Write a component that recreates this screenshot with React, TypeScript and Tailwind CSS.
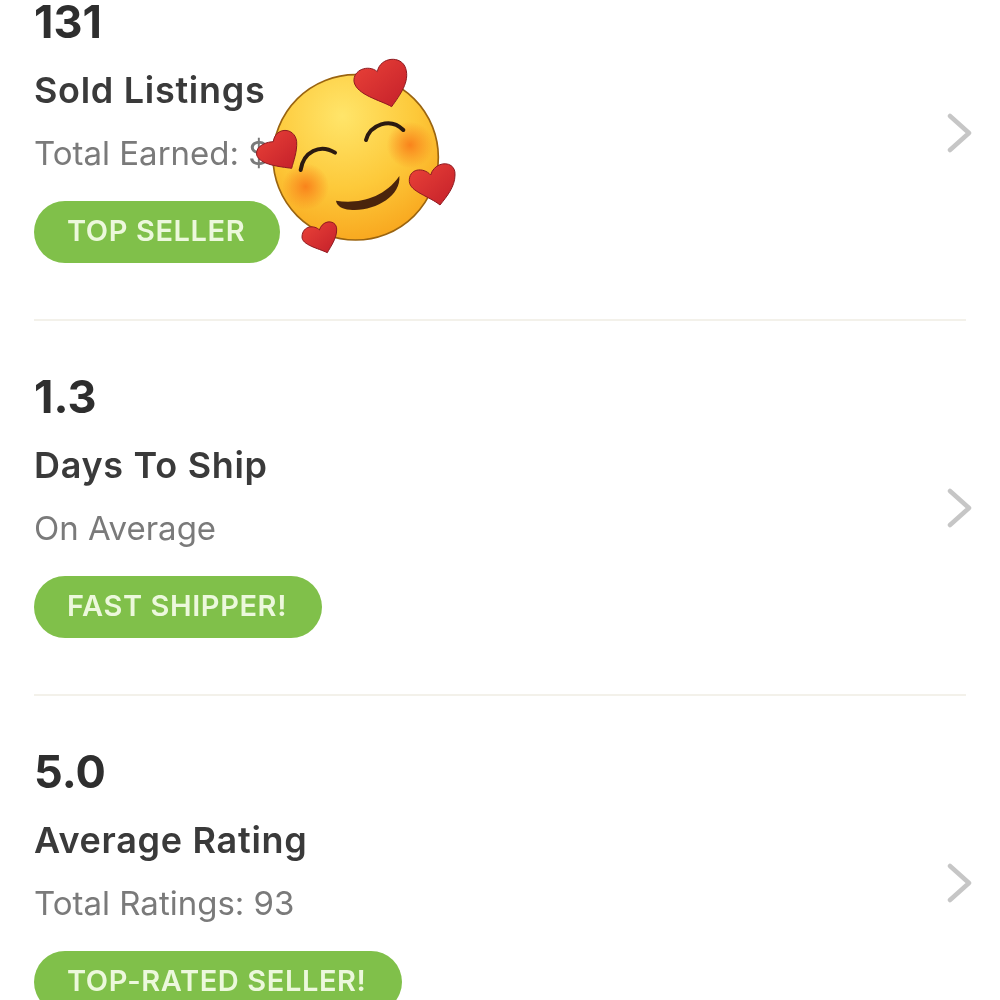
import React from 'react';

type Stat = {
  value: string;
  title: string;
  detail: string;
  badge: string;
};

const stats: Stat[] = [
  { value: '131', title: 'Sold Listings', detail: 'Total Earned: $1,204', badge: 'TOP SELLER' },
  { value: '1.3', title: 'Days To Ship', detail: 'On Average', badge: 'FAST SHIPPER!' },
  { value: '5.0', title: 'Average Rating', detail: 'Total Ratings: 93', badge: 'TOP-RATED SELLER!' },
];

function Chevron() {
  return (
    <svg className="w-[28px] h-[40px] -mr-[7px] shrink-0" viewBox="0 0 28 40" fill="none" stroke="#c6c6c6" strokeWidth={4.5} strokeLinecap="round" strokeLinejoin="round">
      <path d="M5 3 L24 20 L5 37" />
    </svg>
  );
}

function StatRow({ stat }: { stat: Stat }) {
  return (
    <div className="h-[375px] flex items-center justify-between border-b-2 border-[#f3f1ea]">
      <div className="flex flex-col items-start">
        <div className="h-[40px] text-[45px] leading-[40px] font-bold text-[#2e2e2e]">{stat.value}</div>
        <div className="mt-[30px] h-[36px] text-[36px] leading-[36px] font-semibold tracking-[0.7px] text-[#3a3a3a]">{stat.title}</div>
        <div className="mt-[27px] h-[36px] text-[33px] leading-[36px] text-[#7a7a7a]">{stat.detail}</div>
        <div className="mt-[30px] h-[62px] pl-[33px] pr-[35px] pb-[3px] rounded-full bg-[#80c04a] flex items-center text-[29px] font-semibold tracking-[0.6px] text-[#ecf8dc]">
          {stat.badge}
        </div>
      </div>
      <Chevron />
    </div>
  );
}

// sticker sitting on top of the first row
function LoveEmoji() {
  return (
    <svg className="absolute left-[240px] top-[40px] w-[230px] h-[230px]" viewBox="0 0 690 690">
      <defs>
        <radialGradient id="face" cx="42%" cy="25%" r="80%">
          <stop offset="0%" stopColor="#ffe56a" />
          <stop offset="55%" stopColor="#fdc93a" />
          <stop offset="100%" stopColor="#f8a41c" />
        </radialGradient>
        <radialGradient id="cheek">
          <stop offset="0%" stopColor="#f9801a" stopOpacity="0.95" />
          <stop offset="100%" stopColor="#f9801a" stopOpacity="0" />
        </radialGradient>
        <linearGradient id="heart" x1="0" y1="0" x2="1" y2="1">
          <stop offset="0%" stopColor="#ea4238" />
          <stop offset="100%" stopColor="#c4202a" />
        </linearGradient>
      </defs>
      <ellipse cx="347" cy="352" rx="248" ry="248" fill="url(#face)" stroke="#9a6410" strokeWidth="5" />
      <circle cx="197" cy="440" r="70" fill="url(#cheek)" />
      <circle cx="510" cy="315" r="70" fill="url(#cheek)" />
      <path d="M182 390 C190 335 240 310 285 338" fill="none" stroke="#2b1a10" strokeWidth="12" strokeLinecap="round" />
      <path d="M378 300 C390 255 450 230 490 270" fill="none" stroke="#2b1a10" strokeWidth="12" strokeLinecap="round" />
      <path d="M288 482 C350 492 430 478 478 408 C484 470 400 516 330 509 C305 507 290 497 288 482Z" fill="#4a240c" />
      <g fill="url(#heart)" stroke="#8e1a20" strokeWidth="3">
        <path d="M455 200 C420 180 350 165 342 125 C338 90 385 72 412 95 C420 50 485 45 497 85 C510 125 480 165 455 200Z" />
        <path d="M155 385 C120 380 60 375 50 345 C45 315 85 305 100 305 C105 260 165 260 170 305 C172 335 160 365 155 385Z" />
        <path d="M600 495 C570 470 510 455 508 425 C505 385 550 380 572 405 C585 360 648 360 645 405 C645 440 620 470 600 495Z" />
        <path d="M262 638 C235 625 185 615 186 590 C188 555 225 555 238 570 C250 535 292 540 290 570 C290 595 272 620 262 638Z" />
      </g>
    </svg>
  );
}

export default function App() {
  return (
    <div className="relative w-[1000px] h-[1000px] overflow-hidden bg-white blur-[0.5px] font-['Inter','Liberation_Sans',sans-serif]">
      <div className="-mt-[54px] px-[34px]">
        {stats.map((stat) => (
          <StatRow key={stat.value} stat={stat} />
        ))}
      </div>
      <LoveEmoji />
    </div>
  );
}
